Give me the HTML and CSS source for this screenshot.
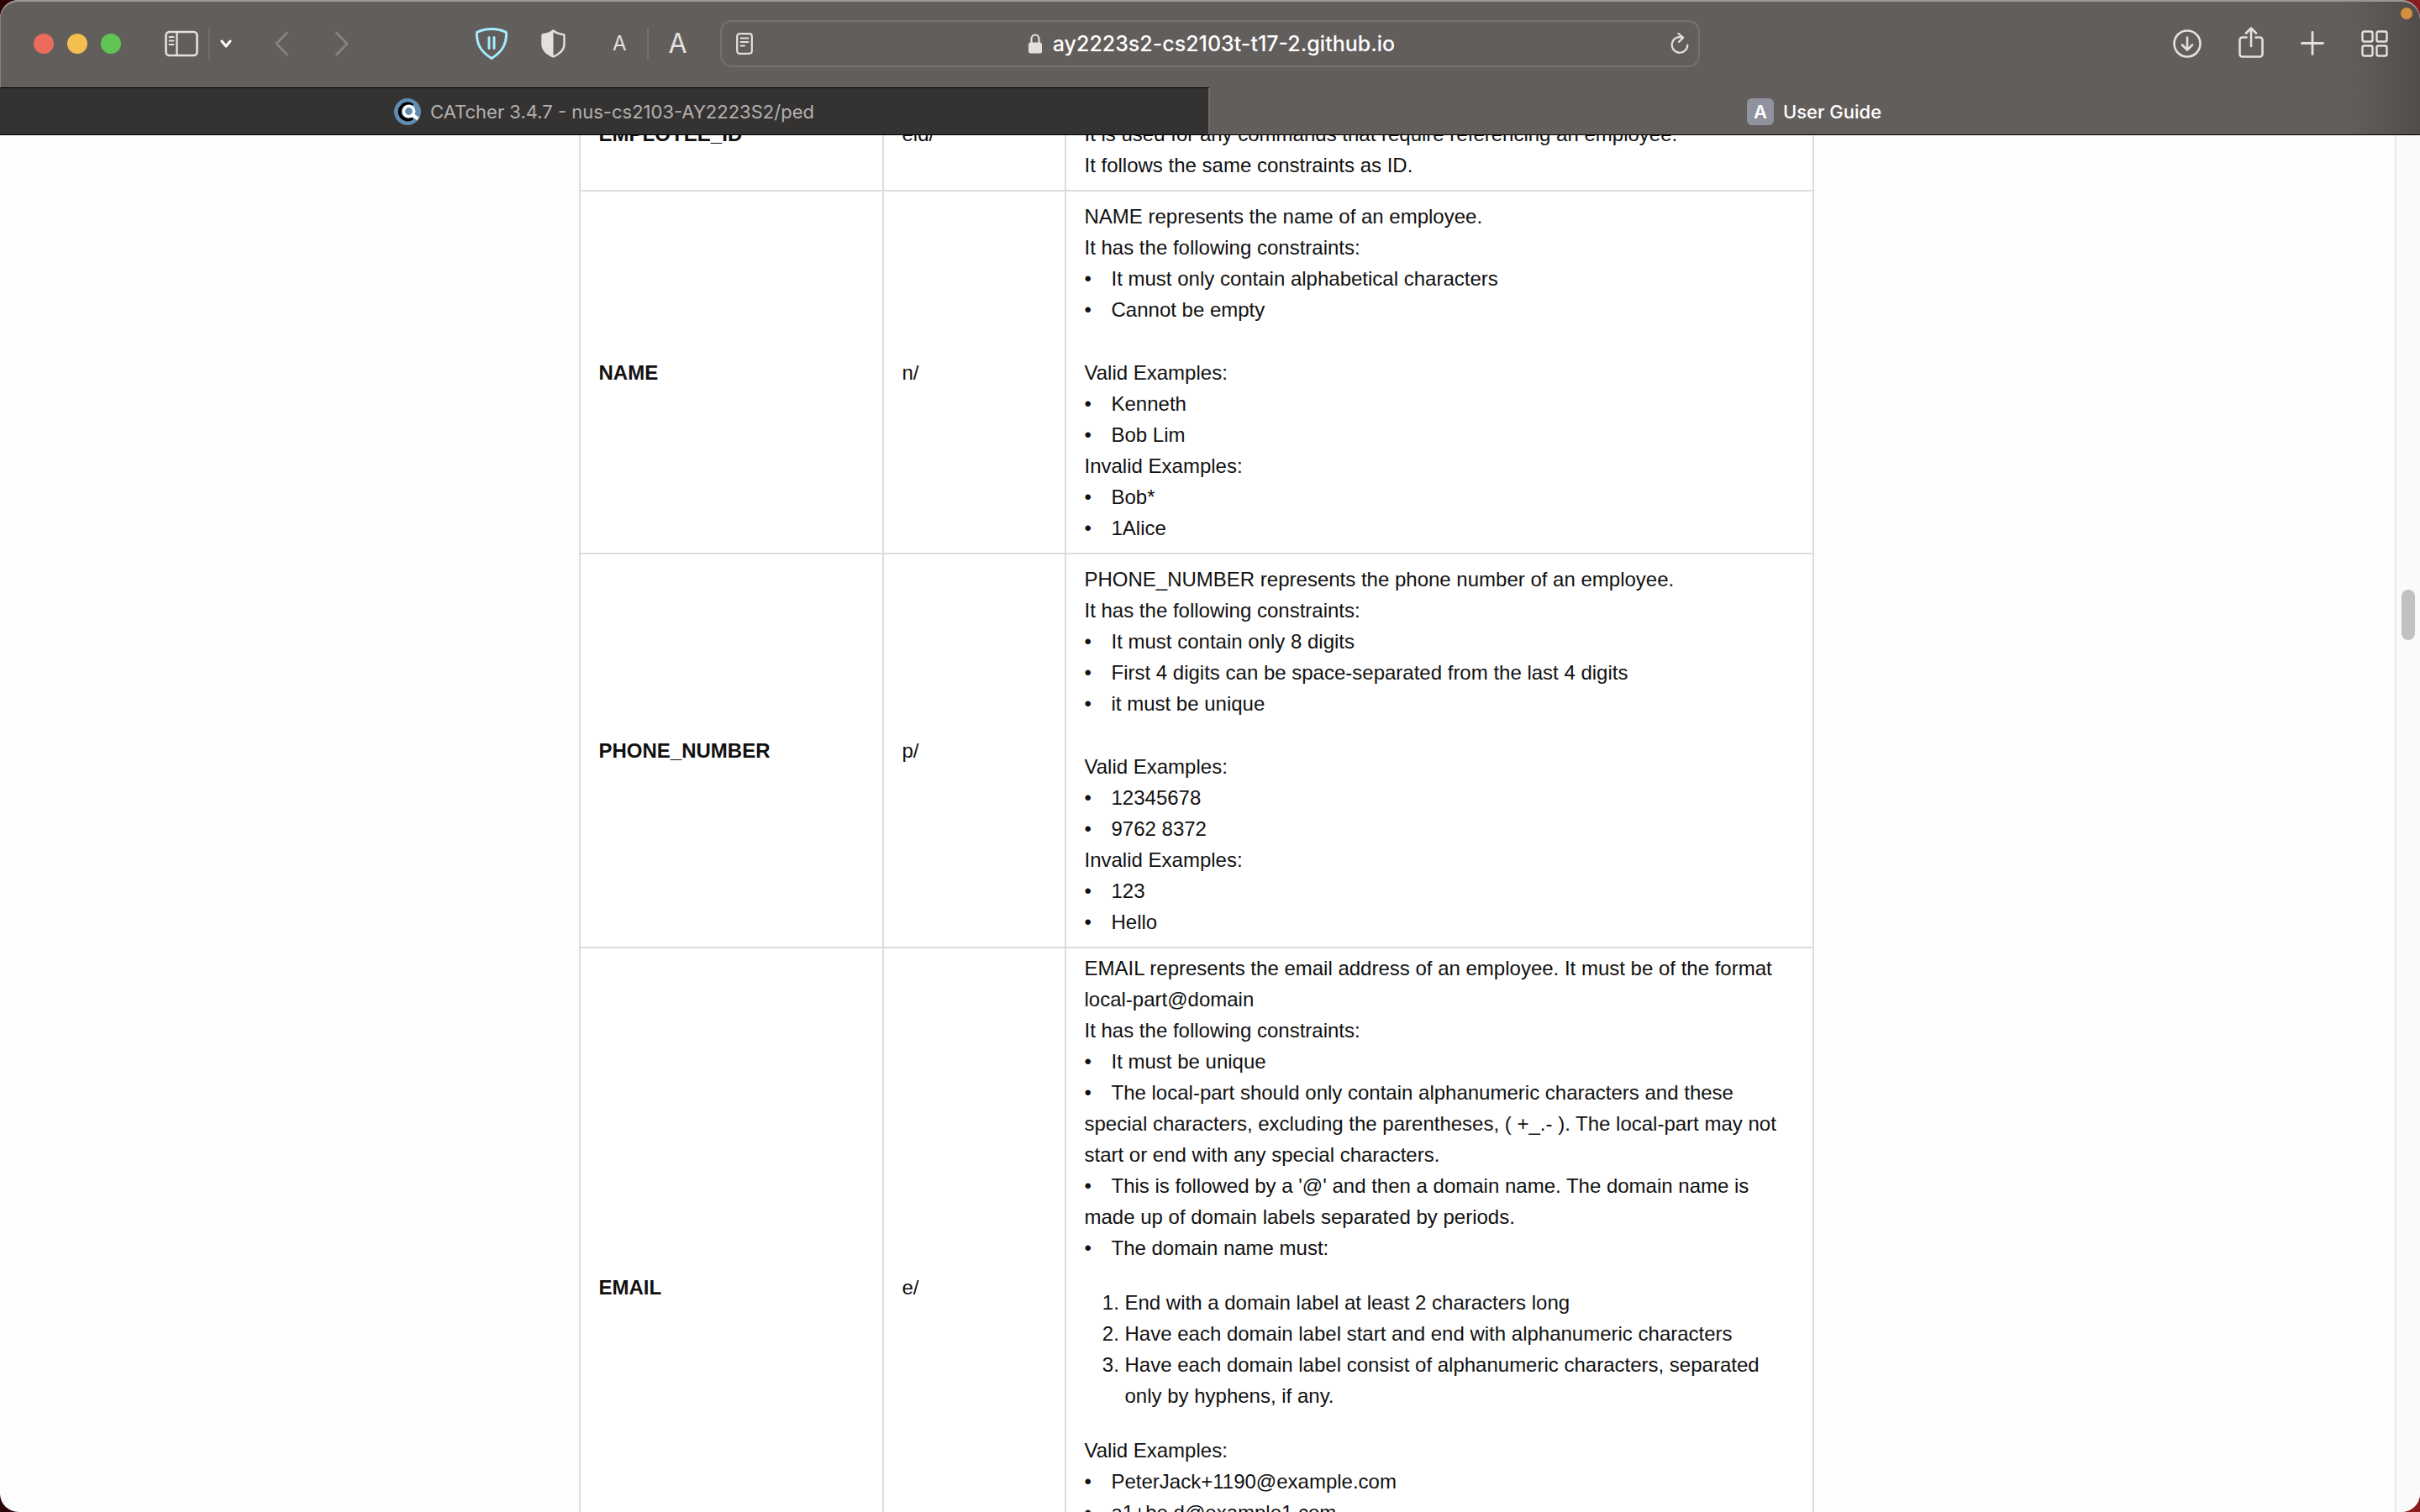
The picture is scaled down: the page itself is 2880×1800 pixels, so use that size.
FILE: index.html
```html
<!DOCTYPE html>
<html lang="en">
<head>
<meta charset="utf-8">
<title>User Guide</title>
<link rel="stylesheet" href="styles.css">
</head>
<body>
<div class="window">
  <header class="chrome">
    <span class="recording-dot"></span>
    <div class="toolbar">
      <div class="tools tools-left">
        <div class="lights">
          <button class="light close" aria-label="Close"></button>
          <button class="light minimise" aria-label="Minimise"></button>
          <button class="light expand" aria-label="Full screen"></button>
        </div>
        <div class="group sidebar-group">
          <button class="icon" aria-label="Show sidebar">
            <svg width="40" height="32" viewBox="0 0 40 32" fill="none" stroke="currentColor"><rect x="1.5" y="2" width="37" height="28" rx="4" stroke-width="2.6"/><path d="M14.5 2v28" stroke-width="2.4"/><path d="M5.500 8h5M5.500 12.500h5M5.500 17h5" stroke-width="1.800" stroke-linecap="round"/></svg>
          </button>
          <span class="rule"></span>
          <button class="icon bright" aria-label="Tab groups">
            <svg width="14" height="12" viewBox="0 0 14 12" fill="none" stroke="currentColor" stroke-width="3" stroke-linecap="round" stroke-linejoin="round"><path d="M2 3l5 6 5-6"/></svg>
          </button>
        </div>
        <div class="group history">
          <button class="icon dim" aria-label="Back">
            <svg width="16" height="30" viewBox="0 0 16 30" fill="none" stroke="currentColor" stroke-width="2.600" stroke-linecap="round" stroke-linejoin="round"><path d="M14.500 2L2 15l12.500 13"/></svg>
          </button>
          <button class="icon dim" aria-label="Forward">
            <svg width="16" height="30" viewBox="0 0 16 30" fill="none" stroke="currentColor" stroke-width="2.600" stroke-linecap="round" stroke-linejoin="round"><path d="M1.500 2L14 15 1.500 28"/></svg>
          </button>
        </div>
        <div class="group shields">
          <button class="icon guard" aria-label="Content blocker">
            <svg width="38" height="40" viewBox="0 0 38 40" fill="none" stroke="currentColor" stroke-linejoin="round"><path d="M19 2.500c6 0 12 1.200 17.500 4C37 20 32.500 29 19 37.500 5.500 29 1 20 1.500 6.500 7 3.700 13 2.500 19 2.500z" stroke-width="3"/><path d="M16 12.500v13M22 12.500v13" stroke-width="3" stroke-linecap="round"/></svg>
          </button>
          <button class="icon" aria-label="Privacy report">
            <svg width="29" height="34" viewBox="0 0 29 34"><path d="M14.500 1.500C18 4.500 22 5.500 26 6c1 0 1.500.8 1.500 1.500v10c0 7-5 11.500-13 15-8-3.500-13-8-13-15v-10C1.500 6.800 2 6 3 6c4-.5 8-1.500 11.500-4.500z" fill="none" stroke="currentColor" stroke-width="2.400"/><path d="M14.500 1.500C11 4.500 7 5.500 3 6c-1 0-1.500.8-1.500 1.500v10c0 7 5 11.500 13 15z" fill="currentColor"/></svg>
          </button>
        </div>
        <div class="group zoom">
          <button class="letter small" aria-label="Smaller text">A</button>
          <span class="rule"></span>
          <button class="letter large" aria-label="Larger text">A</button>
        </div>
      </div>

      <div class="address">
        <button class="icon" aria-label="Reader">
          <svg width="20" height="26" viewBox="0 0 20 26" fill="none" stroke="currentColor" stroke-linecap="round"><rect x="1.200" y="1.200" width="17.600" height="23.600" rx="3" stroke-width="2.200"/><path d="M5.500 6.500h9M5.500 11h9M5.500 15.500h4.500" stroke-width="1.800"/></svg>
        </button>
        <a class="url" href="#">
          <svg width="16" height="24" viewBox="0 0 16 24"><path d="M3.500 12V6.500a4.500 5 0 0 1 9 0V12" fill="none" stroke="currentColor" stroke-width="2.200"/><rect x="0" y="10.500" width="16" height="13" rx="2.500" fill="currentColor"/></svg>
          <span>ay2223s2-cs2103t-t17-2.github.io</span>
        </a>
        <button class="icon" aria-label="Reload">
          <svg width="22" height="26" viewBox="0 0 22 26" fill="none" stroke="currentColor" stroke-width="2.200" stroke-linecap="round" stroke-linejoin="round"><path d="M14.500 5.800A9.300 9.300 0 1 0 20.300 14.500"/><path d="M9.500 1l5.500 4.900-5 5"/></svg>
        </button>
      </div>

      <div class="tools tools-right">
        <button class="icon" aria-label="Downloads">
          <svg width="34" height="34" viewBox="0 0 34 34" fill="none" stroke="currentColor" stroke-width="2.600" stroke-linecap="round" stroke-linejoin="round"><circle cx="17" cy="17" r="15.500"/><path d="M17 9.500v15M11 18.500l6 6 6-6"/></svg>
        </button>
        <button class="icon" aria-label="Share">
          <svg width="30" height="40" viewBox="0 0 30 40" fill="none" stroke="currentColor" stroke-width="2.600" stroke-linecap="round" stroke-linejoin="round"><path d="M9.500 12.500h-5a3 3 0 0 0-3 3v17a3 3 0 0 0 3 3h21a3 3 0 0 0 3-3v-17a3 3 0 0 0-3-3h-5M15 23V1.500M9 7.500l6-6 6 6"/></svg>
        </button>
        <button class="icon" aria-label="New tab">
          <svg width="28" height="30" viewBox="0 0 28 30" fill="none" stroke="currentColor" stroke-width="2.800" stroke-linecap="round"><path d="M14 1.500v26M1.500 14.500h25"/></svg>
        </button>
        <button class="icon" aria-label="Tab overview">
          <svg width="32" height="32" viewBox="0 0 32 32" fill="none" stroke="currentColor" stroke-width="2.400"><rect x="1.500" y="1.500" width="12" height="12" rx="2"/><rect x="18.500" y="1.500" width="12" height="12" rx="2"/><rect x="1.500" y="18.500" width="12" height="12" rx="2"/><rect x="18.500" y="18.500" width="12" height="12" rx="2"/></svg>
        </button>
      </div>
    </div>

    <nav class="tabs">
      <a class="tab" href="#">
        <svg width="32" height="32" viewBox="0 0 32 32" fill="none"><circle cx="16" cy="16" r="16" fill="#5f8cb0"/><path d="M22 8.500A9.500 9.500 0 1 0 22 23.500" stroke="#000" stroke-width="4"/><circle cx="17.500" cy="15.500" r="6.200" stroke="#fff" stroke-width="3.600"/><path d="M22 20l6.500 4.500" stroke="#fff" stroke-width="4"/></svg>
        <span>CATcher 3.4.7 - nus-cs2103-AY2223S2/ped</span>
      </a>
      <a class="tab active" href="#">
        <span class="favicon">A</span>
        <span>User Guide</span>
      </a>
    </nav>
  </header>

  <div class="viewport">
    <main class="page">
      <table class="params">
        <colgroup><col class="col-name"><col class="col-prefix"><col></colgroup>
        <tbody>
          <tr>
            <th scope="row">EMPLOYEE_ID</th>
            <td>eid/</td>
            <td>
              <p>EMPLOYEE_ID represents the ID of an employee.</p>
              <p>It is used for any commands that require referencing an employee.</p>
              <p>It follows the same constraints as ID.</p>
            </td>
          </tr>
          <tr>
            <th scope="row">NAME</th>
            <td>n/</td>
            <td>
              <p>NAME represents the name of an employee.</p>
              <p>It has the following constraints:</p>
              <ul><li>It must only contain alphabetical characters</li><li>Cannot be empty</li></ul>
              <p class="examples">Valid Examples:</p>
              <ul><li>Kenneth</li><li>Bob Lim</li></ul>
              <p>Invalid Examples:</p>
              <ul><li>Bob*</li><li>1Alice</li></ul>
            </td>
          </tr>
          <tr>
            <th scope="row">PHONE_NUMBER</th>
            <td>p/</td>
            <td>
              <p>PHONE_NUMBER represents the phone number of an employee.</p>
              <p>It has the following constraints:</p>
              <ul><li>It must contain only 8 digits</li><li>First 4 digits can be space-separated from the last 4 digits</li><li>it must be unique</li></ul>
              <p class="examples">Valid Examples:</p>
              <ul><li>12345678</li><li>9762 8372</li></ul>
              <p>Invalid Examples:</p>
              <ul><li>123</li><li>Hello</li></ul>
            </td>
          </tr>
          <tr class="long">
            <th scope="row">EMAIL</th>
            <td>e/</td>
            <td>
              <p>EMAIL represents the email address of an employee. It must be of the format local-part@domain</p>
              <p>It has the following constraints:</p>
              <ul>
                <li>It must be unique</li>
                <li>The local-part should only contain alphanumeric characters and these special characters, excluding the parentheses, ( +_.- ). The local-part may not start or end with any special characters.</li>
                <li>This is followed by a '@' and then a domain name. The domain name is made up of domain labels separated by periods.</li>
                <li>The domain name must:</li>
              </ul>
              <ol>
                <li>End with a domain label at least 2 characters long</li>
                <li>Have each domain label start and end with alphanumeric characters</li>
                <li>Have each domain label consist of alphanumeric characters, separated only by hyphens, if any.</li>
              </ol>
              <p>Valid Examples:</p>
              <ul><li>PeterJack+1190@example.com</li><li>a1+be.d@example1.com</li></ul>
              <p>Invalid Examples:</p>
              <ul><li>@example.com</li><li>peterjack</li></ul>
            </td>
          </tr>
        </tbody>
      </table>
    </main>
    <div class="scroll-track"><div class="scroll-thumb"></div></div>
  </div>
</div>
</body>
</html>
```
FILE: styles.css
```css
* {
  box-sizing: border-box;
}

body {
  margin: 0;
  background: linear-gradient(90deg, #2b0508, #8a1b1e);
}

button {
  padding: 0;
  border: 0;
  background: none;
  color: inherit;
  font: inherit;
}

a {
  color: inherit;
  text-decoration: none;
}

svg {
  display: block;
}

.window {
  display: flex;
  flex-direction: column;
  height: 100vh;
  overflow: hidden;
  border-radius: 22px;
  background: #fdfdfd;
}

/* Browser chrome */
.chrome {
  position: relative;
  flex: none;
  border-radius: 22px 22px 0 0;
  border-bottom: 1px solid #000;
  background: linear-gradient(90deg, #625e5c 0, #625e5c 97%, #514d4b 100%);
  box-shadow: inset 0 2px #9a9796, inset 1px 0 #858281;
  color: #e4e0df;
  font-family: Inter, "Liberation Sans", sans-serif;
}

.recording-dot {
  position: absolute;
  top: 9px;
  right: 9px;
  width: 14px;
  height: 14px;
  border-radius: 50%;
  background: #d5903f;
}

.toolbar {
  display: grid;
  grid-template-columns: 1fr minmax(0, 1166px) 1fr;
  align-items: center;
  height: 104px;
}

.tools,
.group,
.lights {
  display: flex;
  align-items: center;
}

.tools-left {
  padding-left: 40px;
}

.tools-right {
  justify-content: flex-end;
  gap: 44px;
  padding-right: 38px;
}

.lights {
  gap: 16px;
}

.light {
  width: 24px;
  height: 24px;
  border-radius: 50%;
}

.close { background: #ec6a5e; }
.minimise { background: #f4bf4f; }
.expand { background: #61c554; }

.rule {
  width: 2px;
  height: 38px;
  background: #74706f;
}

.bright { color: #fff; }
.dim { color: #878382; }
.guard { color: #a4ecff; }

.sidebar-group {
  gap: 12px;
  margin-left: 52px;
}

.history {
  gap: 56px;
  margin-left: 51px;
}

.shields {
  gap: 40px;
  margin-left: 151px;
}

.zoom {
  gap: 24px;
  margin-left: 56px;
}

.letter {
  line-height: 40px;
  font-weight: 400;
}

.small { font-size: 24px; }
.large { font-size: 32px; }

.address {
  display: flex;
  align-items: center;
  justify-content: space-between;
  height: 56px;
  padding: 0 11px 0 17px;
  border: 2px solid #767271;
  border-radius: 14px;
}

.url {
  display: flex;
  align-items: center;
  gap: 13px;
  font-size: 25px;
  font-weight: 500;
}

.url span {
  color: #fff;
}

.tabs {
  display: grid;
  grid-template-columns: 1fr 1fr;
  height: 56px;
}

.tab {
  display: flex;
  align-items: center;
  justify-content: center;
  gap: 11px;
  border-top: 1px solid #000;
  border-right: 2px solid #6e6b6a;
  background: #353332;
  color: #b3b1b0;
  font-size: 22px;
}

.active {
  border-color: transparent;
  background: none;
  color: #fff;
  font-weight: 500;
}

.favicon {
  width: 32px;
  border-radius: 6px;
  background: #9192a0;
  font-weight: 600;
  line-height: 32px;
  text-align: center;
}

/* Page */
.viewport {
  display: flex;
  flex: 1;
  min-height: 0;
}

.page {
  flex: 1;
  padding-right: 3px;
  overflow: hidden;
}

/* The page is scrolled part-way into the first row */
.params {
  width: 100%;
  max-width: 1470px;
  margin: -70px auto 0;
  border-collapse: collapse;
  table-layout: fixed;
  background: #fff;
  color: #111;
  font-family: "Liberation Sans", Arial, sans-serif;
  font-size: 24px;
  line-height: 37px;
}

.col-name { width: 361px; }
.col-prefix { width: 217px; }

.params th,
.params td {
  padding: 11px 22px;
  border: 2px solid #dcdcdc;
  text-align: left;
  vertical-align: middle;
}

.params .long th,
.params .long td {
  padding-top: 5px;
}

.params p {
  margin: 0;
}

.params .examples {
  margin-top: 38px;
}

.params ul {
  margin: 0;
  padding: 0;
  list-style: none;
}

.params ul li::before {
  content: "•";
  display: inline-block;
  width: 32px;
}

.params ol {
  margin: 28px 0;
  padding-left: 48px;
}

.scroll-track {
  width: 30px;
  padding: 541px 6px 0;
  border-left: 2px solid #e8e8e8;
  background: #fafafa;
}

.scroll-thumb {
  width: 16px;
  height: 60px;
  border-radius: 8px;
  background: #c1c1c1;
}
```
